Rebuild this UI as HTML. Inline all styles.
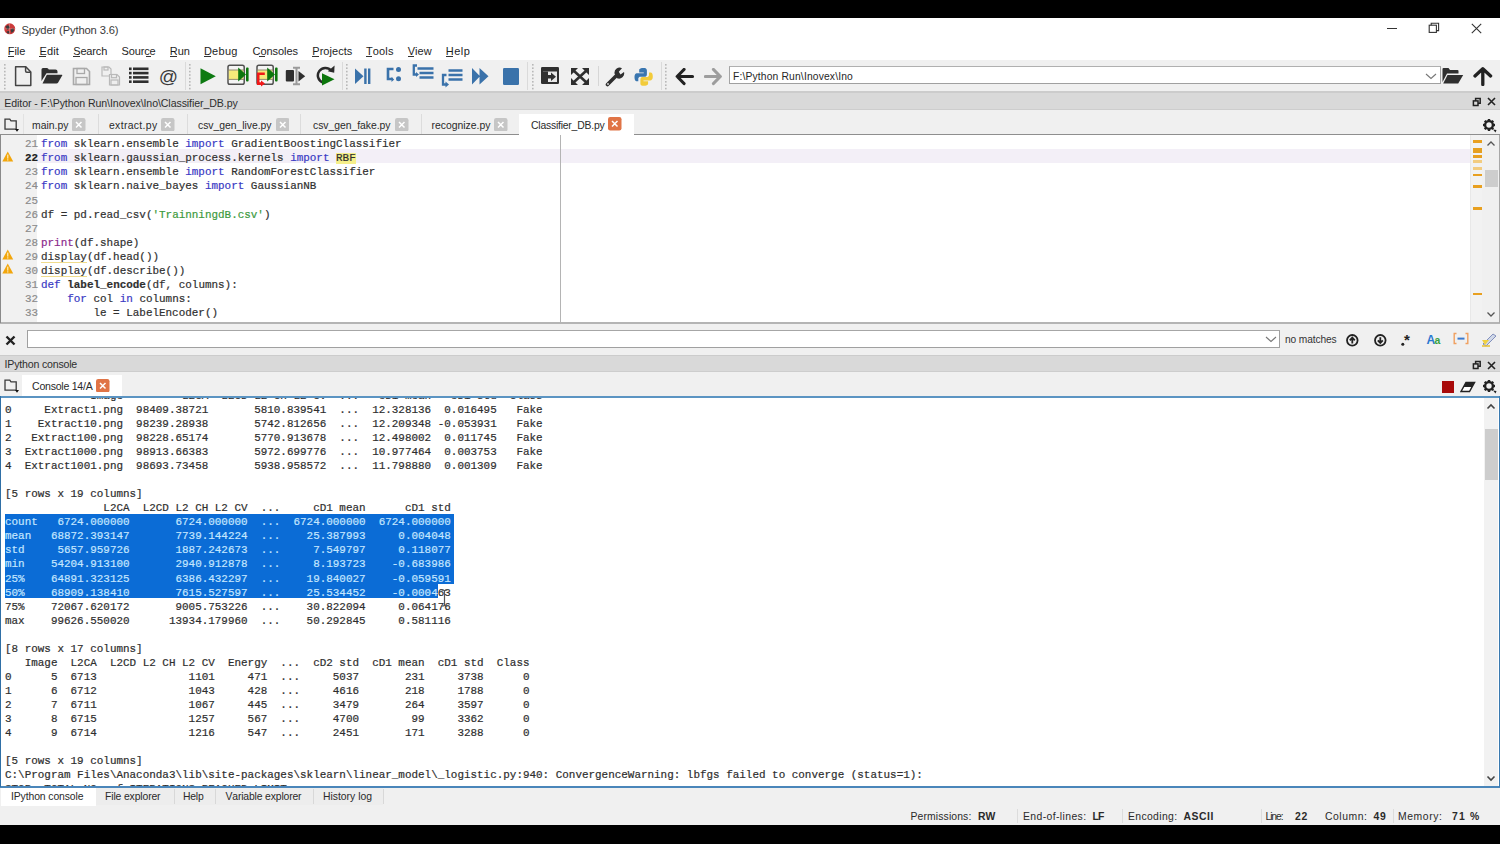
<!DOCTYPE html><html><head><meta charset="utf-8"><style>
html,body{margin:0;padding:0;width:1500px;height:844px;overflow:hidden;background:#000;}
body{position:relative;font-family:"Liberation Sans",sans-serif;font-kerning:none;}
.t{position:absolute;white-space:pre;z-index:5;}
.r{position:absolute;}
.m{position:absolute;white-space:pre;font-family:"Liberation Mono",monospace;font-size:11.2px;line-height:14.0625px;font-kerning:none;transform:scaleX(0.97656);transform-origin:0 0;-webkit-text-stroke:0.2px currentColor;}
</style></head><body>
<div class="r" style="left:0px;top:0px;width:1500px;height:18px;background:#000;"></div>
<div class="r" style="left:0px;top:18px;width:1500px;height:42px;background:#ffffff;"></div>
<div class="r" style="left:0px;top:60px;width:1500px;height:31px;background:#f0f0f0;"></div>
<div class="r" style="left:0px;top:92px;width:1500px;height:18px;background:#d9d9d9;"></div>
<div class="r" style="left:0px;top:91px;width:1500px;height:2px;background:#cccccc;"></div>
<div class="r" style="left:0px;top:109px;width:1500px;height:1.5px;background:#cdcdcd;"></div>
<div class="r" style="left:0px;top:110px;width:1500px;height:25px;background:#f0f0f0;"></div>
<div class="r" style="left:0px;top:133.6px;width:1500px;height:1.6px;background:#8e8e8e;"></div>
<div class="r" style="left:0px;top:135px;width:1500px;height:188px;background:#ffffff;"></div>
<div class="r" style="left:0px;top:322px;width:1500px;height:2px;background:#b4b4b4;"></div>
<div class="r" style="left:0px;top:324px;width:1500px;height:31px;background:#f0f0f0;"></div>
<div class="r" style="left:0px;top:355px;width:1500px;height:17px;background:#d9d9d9;"></div>
<div class="r" style="left:0px;top:354.5px;width:1500px;height:1.5px;background:#cccccc;"></div>
<div class="r" style="left:0px;top:371px;width:1500px;height:1.5px;background:#cdcdcd;"></div>
<div class="r" style="left:0px;top:372px;width:1500px;height:24px;background:#f0f0f0;"></div>
<div class="r" style="left:0px;top:396px;width:1500px;height:391px;background:#ffffff;"></div>
<div class="r" style="left:0px;top:787px;width:1500px;height:38px;background:#f0f0f0;"></div>
<div class="r" style="left:0px;top:825px;width:1500px;height:19px;background:#000;"></div>
<div class="t" style="left:21.50px;top:24.00px;font-size:11.2px;line-height:13.44px;color:#3a3a3a;letter-spacing:-0.137px;">Spyder (Python 3.6)</div>
<div class="t" style="left:7.80px;top:44.59px;font-size:11px;line-height:13.2px;color:#1e1e1e;letter-spacing:-0.081px;">File</div>
<div class="t" style="left:39.40px;top:44.59px;font-size:11px;line-height:13.2px;color:#1e1e1e;letter-spacing:0.161px;">Edit</div>
<div class="t" style="left:73.20px;top:44.59px;font-size:11px;line-height:13.2px;color:#1e1e1e;letter-spacing:-0.142px;">Search</div>
<div class="t" style="left:121.50px;top:44.59px;font-size:11px;line-height:13.2px;color:#1e1e1e;letter-spacing:-0.142px;">Source</div>
<div class="t" style="left:169.70px;top:44.59px;font-size:11px;line-height:13.2px;color:#1e1e1e;letter-spacing:0.040px;">Run</div>
<div class="t" style="left:203.90px;top:44.59px;font-size:11px;line-height:13.2px;color:#1e1e1e;letter-spacing:0.277px;">Debug</div>
<div class="t" style="left:252.50px;top:44.59px;font-size:11px;line-height:13.2px;color:#1e1e1e;letter-spacing:-0.045px;">Consoles</div>
<div class="t" style="left:312.30px;top:44.59px;font-size:11px;line-height:13.2px;color:#1e1e1e;letter-spacing:0.033px;">Projects</div>
<div class="t" style="left:366.00px;top:44.59px;font-size:11px;line-height:13.2px;color:#1e1e1e;letter-spacing:0.140px;">Tools</div>
<div class="t" style="left:407.80px;top:44.59px;font-size:11px;line-height:13.2px;color:#1e1e1e;letter-spacing:-0.011px;">View</div>
<div class="t" style="left:445.80px;top:44.59px;font-size:11px;line-height:13.2px;color:#1e1e1e;letter-spacing:0.494px;">Help</div>
<div class="t" style="left:4.30px;top:96.66px;font-size:10.6px;line-height:12.72px;color:#2e2e2e;letter-spacing:-0.090px;">Editor - F:\Python Run\Inovex\Ino\Classifier_DB.py</div>
<div class="t" style="left:4.60px;top:358.36px;font-size:10.6px;line-height:12.72px;color:#2e2e2e;letter-spacing:-0.195px;">IPython console</div>
<div class="t" style="left:32.00px;top:119.65px;font-size:10.4px;line-height:12.48px;color:#2a2a2a;letter-spacing:0.012px;">main.py</div>
<div class="t" style="left:109.00px;top:119.65px;font-size:10.4px;line-height:12.48px;color:#2a2a2a;letter-spacing:0.342px;">extract.py</div>
<div class="t" style="left:198.00px;top:119.65px;font-size:10.4px;line-height:12.48px;color:#2a2a2a;letter-spacing:-0.033px;">csv_gen_live.py</div>
<div class="t" style="left:313.00px;top:119.65px;font-size:10.4px;line-height:12.48px;color:#2a2a2a;letter-spacing:-0.037px;">csv_gen_fake.py</div>
<div class="t" style="left:431.50px;top:119.65px;font-size:10.4px;line-height:12.48px;color:#2a2a2a;letter-spacing:0.003px;">recognize.py</div>
<div class="t" style="left:531.00px;top:119.65px;font-size:10.4px;line-height:12.48px;color:#2a2a2a;letter-spacing:-0.210px;">Classifier_DB.py</div>
<div class="t" style="left:1285.00px;top:334.34px;font-size:10.2px;line-height:12.24px;color:#333;letter-spacing:-0.123px;">no matches</div>
<div class="t" style="left:32.00px;top:379.86px;font-size:10.6px;line-height:12.72px;color:#2a2a2a;letter-spacing:-0.262px;">Console 14/A</div>
<div class="t" style="left:11.00px;top:791.15px;font-size:10.4px;line-height:12.48px;color:#2a2a2a;letter-spacing:-0.100px;">IPython console</div>
<div class="t" style="left:105.00px;top:791.15px;font-size:10.4px;line-height:12.48px;color:#2a2a2a;letter-spacing:-0.132px;">File explorer</div>
<div class="t" style="left:183.00px;top:791.15px;font-size:10.4px;line-height:12.48px;color:#2a2a2a;letter-spacing:-0.222px;">Help</div>
<div class="t" style="left:225.50px;top:791.15px;font-size:10.4px;line-height:12.48px;color:#2a2a2a;letter-spacing:-0.154px;">Variable explorer</div>
<div class="t" style="left:323.00px;top:791.15px;font-size:10.4px;line-height:12.48px;color:#2a2a2a;letter-spacing:-0.011px;">History log</div>
<div class="t" style="left:910.50px;top:811.15px;font-size:10.4px;line-height:12.48px;color:#2a2a2a;letter-spacing:0.123px;">Permissions:</div>
<div class="t" style="left:978.00px;top:811.15px;font-size:10.4px;line-height:12.48px;color:#2a2a2a;font-weight:bold;letter-spacing:0.087px;">RW</div>
<div class="t" style="left:1023.00px;top:811.15px;font-size:10.4px;line-height:12.48px;color:#2a2a2a;letter-spacing:0.394px;">End-of-lines:</div>
<div class="t" style="left:1092.50px;top:811.15px;font-size:10.4px;line-height:12.48px;color:#2a2a2a;font-weight:bold;letter-spacing:-0.853px;">LF</div>
<div class="t" style="left:1128.00px;top:811.15px;font-size:10.4px;line-height:12.48px;color:#2a2a2a;letter-spacing:0.360px;">Encoding:</div>
<div class="t" style="left:1183.50px;top:811.15px;font-size:10.4px;line-height:12.48px;color:#2a2a2a;font-weight:bold;letter-spacing:0.553px;">ASCII</div>
<div class="t" style="left:1265.50px;top:811.15px;font-size:10.4px;line-height:12.48px;color:#2a2a2a;letter-spacing:-1.110px;">Line:</div>
<div class="t" style="left:1295.00px;top:811.15px;font-size:10.4px;line-height:12.48px;color:#2a2a2a;font-weight:bold;letter-spacing:0.716px;">22</div>
<div class="t" style="left:1325.00px;top:811.15px;font-size:10.4px;line-height:12.48px;color:#2a2a2a;letter-spacing:0.539px;">Column:</div>
<div class="t" style="left:1373.50px;top:811.15px;font-size:10.4px;line-height:12.48px;color:#2a2a2a;font-weight:bold;letter-spacing:0.716px;">49</div>
<div class="t" style="left:1398.00px;top:811.15px;font-size:10.4px;line-height:12.48px;color:#2a2a2a;letter-spacing:0.579px;">Memory:</div>
<div class="t" style="left:1452.00px;top:811.15px;font-size:10.4px;line-height:12.48px;color:#2a2a2a;font-weight:bold;letter-spacing:1.199px;">71 %</div>
<div style="position:absolute;left:1px;top:135px;width:1470px;height:187px;overflow:hidden;background:#fff;">
<div class="r" style="left:0px;top:0px;width:36px;height:187px;background:#f1f1f1;"></div>
<div class="r" style="left:36px;top:14px;width:1434px;height:14px;background:#f3eff7;"></div>
<div class="r" style="left:559px;top:0px;width:1.2px;height:187px;background:#b4b4b4;"></div>
<div class="r" style="left:334.5px;top:18px;width:20.5px;height:11px;background:#f6ef8a;"></div>
<div class="m" style="left:23.5px;top:2.29px;color:#8c8c8c;">21</div>
<div class="m" style="left:39.6px;top:2.29px;"><span style="color:#3a3ac4;">from</span><span style="color:#303030;"> sklearn.ensemble </span><span style="color:#3a3ac4;">import</span><span style="color:#303030;"> GradientBoostingClassifier</span></div>
<div class="m" style="left:23.5px;top:16.35px;color:#222;font-weight:bold;">22</div>
<div class="m" style="left:39.6px;top:16.35px;"><span style="color:#3a3ac4;">from</span><span style="color:#303030;"> sklearn.gaussian_process.kernels </span><span style="color:#3a3ac4;">import</span><span style="color:#303030;"> RBF</span></div>
<div class="m" style="left:23.5px;top:30.41px;color:#8c8c8c;">23</div>
<div class="m" style="left:39.6px;top:30.41px;"><span style="color:#3a3ac4;">from</span><span style="color:#303030;"> sklearn.ensemble </span><span style="color:#3a3ac4;">import</span><span style="color:#303030;"> RandomForestClassifier</span></div>
<div class="m" style="left:23.5px;top:44.48px;color:#8c8c8c;">24</div>
<div class="m" style="left:39.6px;top:44.48px;"><span style="color:#3a3ac4;">from</span><span style="color:#303030;"> sklearn.naive_bayes </span><span style="color:#3a3ac4;">import</span><span style="color:#303030;"> GaussianNB</span></div>
<div class="m" style="left:23.5px;top:58.54px;color:#8c8c8c;">25</div>
<div class="m" style="left:39.6px;top:58.54px;"></div>
<div class="m" style="left:23.5px;top:72.60px;color:#8c8c8c;">26</div>
<div class="m" style="left:39.6px;top:72.60px;"><span style="color:#303030;">df = pd.read_csv(</span><span style="color:#3c9a3c;">&#x27;TrainningdB.csv&#x27;</span><span style="color:#303030;">)</span></div>
<div class="m" style="left:23.5px;top:86.66px;color:#8c8c8c;">27</div>
<div class="m" style="left:39.6px;top:86.66px;"></div>
<div class="m" style="left:23.5px;top:100.73px;color:#8c8c8c;">28</div>
<div class="m" style="left:39.6px;top:100.73px;"><span style="color:#8c2a8c;">print</span><span style="color:#303030;">(df.shape)</span></div>
<div class="m" style="left:23.5px;top:114.79px;color:#8c8c8c;">29</div>
<div class="m" style="left:39.6px;top:114.79px;"><span style="color:#303030;">display</span><span style="color:#303030;">(df.head())</span></div>
<div class="m" style="left:23.5px;top:128.85px;color:#8c8c8c;">30</div>
<div class="m" style="left:39.6px;top:128.85px;"><span style="color:#303030;">display</span><span style="color:#303030;">(df.describe())</span></div>
<div class="m" style="left:23.5px;top:142.91px;color:#8c8c8c;">31</div>
<div class="m" style="left:39.6px;top:142.91px;"><span style="color:#3a3ac4;">def</span><span style="color:#303030;"> </span><span style="color:#303030;font-weight:bold;">label_encode</span><span style="color:#303030;">(df, columns):</span></div>
<div class="m" style="left:23.5px;top:156.98px;color:#8c8c8c;">32</div>
<div class="m" style="left:39.6px;top:156.98px;"><span style="color:#303030;">    </span><span style="color:#3a3ac4;">for</span><span style="color:#303030;"> col </span><span style="color:#3a3ac4;">in</span><span style="color:#303030;"> columns:</span></div>
<div class="m" style="left:23.5px;top:171.04px;color:#8c8c8c;">33</div>
<div class="m" style="left:39.6px;top:171.04px;"><span style="color:#303030;">        le = LabelEncoder()</span></div>
<div class="m" style="left:23.5px;top:185.10px;color:#8c8c8c;">34</div>
<div class="m" style="left:39.6px;top:185.10px;"><span style="color:#303030;">        df[col] = le.fit_transform(df[col])</span></div>
<div class="r" style="left:39.6px;top:127.0px;width:45.9375px;height:1.3px;background:#f0dc8c;"></div>
<div class="r" style="left:39.6px;top:141.0625px;width:45.9375px;height:1.3px;background:#f0dc8c;"></div>
<svg class="r" style="left:0.5px;top:15.56px" width="12" height="11" viewBox="0 0 12 11"><path d="M5.75 0.5 L11.2 10.6 L0.3 10.6 Z" fill="#f2a60c"/><rect x="5.1" y="3.6" width="1.3" height="4" fill="#fde9b0"/><rect x="5.1" y="8.3" width="1.3" height="1.2" fill="#fde9b0"/></svg>
<svg class="r" style="left:0.5px;top:114.0px" width="12" height="11" viewBox="0 0 12 11"><path d="M5.75 0.5 L11.2 10.6 L0.3 10.6 Z" fill="#f2a60c"/><rect x="5.1" y="3.6" width="1.3" height="4" fill="#fde9b0"/><rect x="5.1" y="8.3" width="1.3" height="1.2" fill="#fde9b0"/></svg>
<svg class="r" style="left:0.5px;top:128.06px" width="12" height="11" viewBox="0 0 12 11"><path d="M5.75 0.5 L11.2 10.6 L0.3 10.6 Z" fill="#f2a60c"/><rect x="5.1" y="3.6" width="1.3" height="4" fill="#fde9b0"/><rect x="5.1" y="8.3" width="1.3" height="1.2" fill="#fde9b0"/></svg>
</div>
<div class="r" style="left:1470px;top:135px;width:1px;height:187px;background:#e8e8e8;"></div>
<div class="r" style="left:1471px;top:135px;width:11px;height:187px;background:#f2f2f2;"></div>
<div class="r" style="left:1472.5px;top:140px;width:9px;height:2.5px;background:#e8a020;"></div>
<div class="r" style="left:1472.5px;top:147.5px;width:9px;height:5px;background:#e6a020;"></div>
<div class="r" style="left:1472.5px;top:155px;width:9px;height:2.5px;background:#e8a020;"></div>
<div class="r" style="left:1472.5px;top:160px;width:9px;height:2.5px;background:#f2cc80;"></div>
<div class="r" style="left:1472.5px;top:167px;width:9px;height:2.5px;background:#f2cc80;"></div>
<div class="r" style="left:1472.5px;top:173.5px;width:9px;height:2.5px;background:#e8a020;"></div>
<div class="r" style="left:1472.5px;top:185px;width:9px;height:2.5px;background:#e8a020;"></div>
<div class="r" style="left:1472.5px;top:207px;width:9px;height:2.5px;background:#e8a020;"></div>
<div class="r" style="left:1472.5px;top:292.5px;width:9px;height:2.5px;background:#e8a020;"></div>
<div class="r" style="left:1482px;top:135px;width:17px;height:187px;background:#f0f0f0;"></div>
<div class="r" style="left:1484.5px;top:170px;width:13px;height:16.5px;background:#cdcdcd;"></div>
<div class="r" style="left:1499px;top:135px;width:1px;height:188px;background:#a8a8a8;"></div>
<div class="r" style="left:0px;top:135px;width:1px;height:188px;background:#8a8a8a;"></div>
<svg class="r" style="left:1486px;top:140px" width="10" height="7" viewBox="0 0 10 7"><path d="M1.5 5.5 L5 2 L8.5 5.5" stroke="#555" stroke-width="1.3" fill="none"/></svg>
<svg class="r" style="left:1486px;top:311px" width="10" height="7" viewBox="0 0 10 7"><path d="M1.5 1.5 L5 5 L8.5 1.5" stroke="#555" stroke-width="1.3" fill="none"/></svg>
<div style="position:absolute;left:0;top:397px;width:1482px;height:389px;overflow:hidden;">
<div class="r" style="left:4.5px;top:117.00px;width:449.5px;height:70.312px;background:#0b6cd6;"></div>
<div class="r" style="left:4.5px;top:187.31px;width:433.5px;height:14.062px;background:#0b6cd6;"></div>
<div class="m" style="left:4.8px;top:-8.27px;color:#2e2e2e;">             Image         L2CA  L2CD L2 CH L2 CV  ...   cD1 mean   cD1 std  Class
0     Extract1.png  98409.38721       5810.839541  ...  12.328136  0.016495   Fake
1    Extract10.png  98239.28938       5742.812656  ...  12.209348 -0.053931   Fake
2   Extract100.png  98228.65174       5770.913678  ...  12.498002  0.011745   Fake
3  Extract1000.png  98913.66383       5972.699776  ...  10.977464  0.003753   Fake
4  Extract1001.png  98693.73458       5938.958572  ...  11.798880  0.001309   Fake

[5 rows x 19 columns]
               L2CA  L2CD L2 CH L2 CV  ...     cD1 mean      cD1 std
<span style="color:#c4e6ff">count   6724.000000       6724.000000  ...  6724.000000  6724.000000</span>
<span style="color:#c4e6ff">mean   68872.393147       7739.144224  ...    25.387993     0.004048</span>
<span style="color:#c4e6ff">std     5657.959726       1887.242673  ...     7.549797     0.118077</span>
<span style="color:#c4e6ff">min    54204.913100       2940.912878  ...     8.193723    -0.683986</span>
<span style="color:#c4e6ff">25%    64891.323125       6386.432297  ...    19.840027    -0.059591</span>
<span style="color:#c4e6ff">50%    68909.138410       7615.527597  ...    25.534452    -0.0004</span>63
75%    72067.620172       9005.753226  ...    30.822094     0.064176
max    99626.550020      13934.179960  ...    50.292845     0.581116

[8 rows x 17 columns]
   Image  L2CA  L2CD L2 CH L2 CV  Energy  ...  cD2 std  cD1 mean  cD1 std  Class
0      5  6713              1101     471  ...     5037       231     3738      0
1      6  6712              1043     428  ...     4616       218     1788      0
2      7  6711              1067     445  ...     3479       264     3597      0
3      8  6715              1257     567  ...     4700        99     3362      0
4      9  6714              1216     547  ...     2451       171     3288      0

[5 rows x 19 columns]
C:\Program Files\Anaconda3\lib\site-packages\sklearn\linear_model\_logistic.py:940: ConvergenceWarning: lbfgs failed to converge (status=1):
STOP: TOTAL NO. of ITERATIONS REACHED LIMIT.
</div>
</div>
<svg class="r" style="left:3px;top:22px" width="14" height="14" viewBox="0 0 14 14"><circle cx="6.7" cy="6.8" r="5.5" fill="#cc3a3a"/><path d="M2.5 4.5 L5 3 L7 5.5 L4.5 8 Z M7.5 7.5 L10.5 6 L11 9 L8.5 11 Z M3.5 9.5 L6 9 L6.5 11.8 L4 11 Z" fill="#3c3c3c"/><path d="M6.5 1.3 L6.5 12.3 M1.2 6.8 L12.2 6.8" stroke="#fff" stroke-width="0.5" opacity="0.5"/></svg>
<div class="r" style="left:1386.5px;top:28px;width:10px;height:1.2px;background:#333;"></div>
<svg class="r" style="left:1428px;top:22px" width="12" height="12" viewBox="0 0 12 12"><rect x="1.2" y="3.2" width="7.2" height="7.2" fill="none" stroke="#333" stroke-width="1.1"/><path d="M3.2 3.2 V1.2 H10.6 V8.6 H8.4" fill="none" stroke="#333" stroke-width="1.1"/></svg>
<svg class="r" style="left:1471px;top:22.5px" width="11" height="11" viewBox="0 0 11 11"><path d="M0.8 0.8 L10.2 10.2 M10.2 0.8 L0.8 10.2" stroke="#333" stroke-width="1.1"/></svg>
<div class="r" style="left:7.8px;top:55.6px;width:6px;height:1px;background:#333;"></div>
<div class="r" style="left:39.4px;top:55.6px;width:6.5px;height:1px;background:#333;"></div>
<div class="r" style="left:73.2px;top:55.6px;width:6.5px;height:1px;background:#333;"></div>
<div class="r" style="left:146px;top:55.6px;width:5px;height:1px;background:#333;"></div>
<div class="r" style="left:169.7px;top:55.6px;width:7px;height:1px;background:#333;"></div>
<div class="r" style="left:203.9px;top:55.6px;width:7.5px;height:1px;background:#333;"></div>
<div class="r" style="left:258.5px;top:55.6px;width:6px;height:1px;background:#333;"></div>
<div class="r" style="left:312.3px;top:55.6px;width:6.5px;height:1px;background:#333;"></div>
<div class="r" style="left:366px;top:55.6px;width:6px;height:1px;background:#333;"></div>
<div class="r" style="left:407.8px;top:55.6px;width:6.5px;height:1px;background:#333;"></div>
<div class="r" style="left:445.8px;top:55.6px;width:7px;height:1px;background:#333;"></div>
<svg class="r" style="left:3.7px;top:63.5px" width="2" height="27" viewBox="0 0 2 27"><rect x="0" y="0.0" width="1.6" height="1.6" fill="#b8b8b8"/><rect x="0" y="3.4" width="1.6" height="1.6" fill="#b8b8b8"/><rect x="0" y="6.8" width="1.6" height="1.6" fill="#b8b8b8"/><rect x="0" y="10.2" width="1.6" height="1.6" fill="#b8b8b8"/><rect x="0" y="13.6" width="1.6" height="1.6" fill="#b8b8b8"/><rect x="0" y="17.0" width="1.6" height="1.6" fill="#b8b8b8"/><rect x="0" y="20.4" width="1.6" height="1.6" fill="#b8b8b8"/><rect x="0" y="23.8" width="1.6" height="1.6" fill="#b8b8b8"/></svg>
<svg class="r" style="left:189.2px;top:63.5px" width="2" height="27" viewBox="0 0 2 27"><rect x="0" y="0.0" width="1.6" height="1.6" fill="#b8b8b8"/><rect x="0" y="3.4" width="1.6" height="1.6" fill="#b8b8b8"/><rect x="0" y="6.8" width="1.6" height="1.6" fill="#b8b8b8"/><rect x="0" y="10.2" width="1.6" height="1.6" fill="#b8b8b8"/><rect x="0" y="13.6" width="1.6" height="1.6" fill="#b8b8b8"/><rect x="0" y="17.0" width="1.6" height="1.6" fill="#b8b8b8"/><rect x="0" y="20.4" width="1.6" height="1.6" fill="#b8b8b8"/><rect x="0" y="23.8" width="1.6" height="1.6" fill="#b8b8b8"/></svg>
<svg class="r" style="left:346.2px;top:63.5px" width="2" height="27" viewBox="0 0 2 27"><rect x="0" y="0.0" width="1.6" height="1.6" fill="#b8b8b8"/><rect x="0" y="3.4" width="1.6" height="1.6" fill="#b8b8b8"/><rect x="0" y="6.8" width="1.6" height="1.6" fill="#b8b8b8"/><rect x="0" y="10.2" width="1.6" height="1.6" fill="#b8b8b8"/><rect x="0" y="13.6" width="1.6" height="1.6" fill="#b8b8b8"/><rect x="0" y="17.0" width="1.6" height="1.6" fill="#b8b8b8"/><rect x="0" y="20.4" width="1.6" height="1.6" fill="#b8b8b8"/><rect x="0" y="23.8" width="1.6" height="1.6" fill="#b8b8b8"/></svg>
<svg class="r" style="left:531.7px;top:63.5px" width="2" height="27" viewBox="0 0 2 27"><rect x="0" y="0.0" width="1.6" height="1.6" fill="#b8b8b8"/><rect x="0" y="3.4" width="1.6" height="1.6" fill="#b8b8b8"/><rect x="0" y="6.8" width="1.6" height="1.6" fill="#b8b8b8"/><rect x="0" y="10.2" width="1.6" height="1.6" fill="#b8b8b8"/><rect x="0" y="13.6" width="1.6" height="1.6" fill="#b8b8b8"/><rect x="0" y="17.0" width="1.6" height="1.6" fill="#b8b8b8"/><rect x="0" y="20.4" width="1.6" height="1.6" fill="#b8b8b8"/><rect x="0" y="23.8" width="1.6" height="1.6" fill="#b8b8b8"/></svg>
<svg class="r" style="left:664.7px;top:63.5px" width="2" height="27" viewBox="0 0 2 27"><rect x="0" y="0.0" width="1.6" height="1.6" fill="#b8b8b8"/><rect x="0" y="3.4" width="1.6" height="1.6" fill="#b8b8b8"/><rect x="0" y="6.8" width="1.6" height="1.6" fill="#b8b8b8"/><rect x="0" y="10.2" width="1.6" height="1.6" fill="#b8b8b8"/><rect x="0" y="13.6" width="1.6" height="1.6" fill="#b8b8b8"/><rect x="0" y="17.0" width="1.6" height="1.6" fill="#b8b8b8"/><rect x="0" y="20.4" width="1.6" height="1.6" fill="#b8b8b8"/><rect x="0" y="23.8" width="1.6" height="1.6" fill="#b8b8b8"/></svg>
<div class="r" style="left:185px;top:62px;width:1px;height:28px;background:#dadada;"></div>
<div class="r" style="left:341.5px;top:62px;width:1px;height:28px;background:#dadada;"></div>
<div class="r" style="left:527px;top:62px;width:1px;height:28px;background:#dadada;"></div>
<div class="r" style="left:660.5px;top:62px;width:1px;height:28px;background:#dadada;"></div>
<div class="r" style="left:598px;top:66px;width:1px;height:20px;background:#d6d6d6;"></div>
<svg class="r" style="left:14px;top:65px" width="20" height="22" viewBox="0 0 20 22"><path d="M1.6 1.8 H11.8 L16.8 7 V20.4 H1.6 Z" fill="#f0f0f0" stroke="#444" stroke-width="1.5" stroke-linejoin="round"/><path d="M11.6 1.8 V6 Q11.6 7.2 12.8 7.2 H16.8" fill="none" stroke="#444" stroke-width="1.5"/></svg>
<svg class="r" style="left:41px;top:67px" width="22" height="18" viewBox="0 0 22 18"><path d="M0.5 2.5 Q0.5 1 2 1 H6 Q7.2 1 7.8 2.5 H14.5 Q16.5 2.5 16.5 4.5 V6.2 H5.5 L0.5 14 Z" fill="#2f2f2f"/><path d="M5.8 7.8 H20.8 Q21.6 7.8 21.2 8.6 L17 15.8 Q16.5 16.6 15.5 16.6 H1.5 Z" fill="#2f2f2f"/></svg>
<svg class="r" style="left:72px;top:67px" width="19" height="19" viewBox="0 0 19 19"><path d="M1.5 1.5 H14.5 L17.5 4.5 V17.5 H1.5 Z" fill="none" stroke="#a9a9a9" stroke-width="1.6"/><rect x="5" y="1.5" width="7.5" height="5" fill="none" stroke="#a9a9a9" stroke-width="1.3"/><rect x="4" y="10.5" width="11" height="7" fill="none" stroke="#a9a9a9" stroke-width="1.3"/></svg>
<svg class="r" style="left:101px;top:66px" width="20" height="20" viewBox="0 0 20 20"><g fill="none" stroke="#b9b9b9" stroke-width="1.2"><path d="M1 1 H8 L10 3 V10 H1 Z"/><rect x="3" y="1" width="4" height="3"/><path d="M8.5 8.5 H16 L18.5 11 V19 H8.5 Z" fill="#eee"/><rect x="10.5" y="8.5" width="5" height="3.2"/><rect x="10" y="14" width="7" height="5"/></g></svg>
<svg class="r" style="left:128px;top:66px" width="22" height="19" viewBox="0 0 22 19"><g fill="#2f2f2f"><rect x="1" y="1.5" width="2.6" height="2.6"/><rect x="5" y="1.5" width="15.5" height="2.6"/><rect x="1" y="5.8" width="2.6" height="2.6"/><rect x="5" y="5.8" width="15.5" height="2.6"/><rect x="1" y="10.1" width="2.6" height="2.6"/><rect x="5" y="10.1" width="15.5" height="2.6"/><rect x="1" y="14.4" width="2.6" height="2.6"/><rect x="5" y="14.4" width="15.5" height="2.6"/></g></svg>
<svg class="r" style="left:159px;top:67px" width="20" height="19" viewBox="0 0 20 19"><text x="9.5" y="15.5" font-family="Liberation Sans" font-size="19" text-anchor="middle" fill="#3a3a3a">@</text></svg>
<svg class="r" style="left:199px;top:67px" width="19" height="19" viewBox="0 0 19 19"><path d="M1.5 1.2 L16.8 9.2 L1.5 17.2 Z" fill="#0e7a12"/></svg>
<svg class="r" style="left:227px;top:64px" width="24" height="23" viewBox="0 0 24 23"><rect x="1" y="1.2" width="16.2" height="19" rx="1.8" fill="#f4f4f4" stroke="#505050" stroke-width="1.5"/><rect x="1.8" y="6.2" width="14.6" height="9" fill="#f6ea7a"/><line x1="1" y1="6" x2="17" y2="6" stroke="#8a8060" stroke-width="0.9"/><line x1="1" y1="15.4" x2="17" y2="15.4" stroke="#8a8060" stroke-width="0.9"/><path d="M11.2 3.6 L19 10.6 L11.2 17.4 Z" fill="#0e760e"/><rect x="19" y="3.6" width="2.6" height="13.8" rx="1" fill="#0e760e"/></svg>
<svg class="r" style="left:256px;top:64px" width="24" height="24" viewBox="0 0 24 24"><rect x="1" y="1.2" width="16.2" height="19" rx="1.8" fill="#f4f4f4" stroke="#505050" stroke-width="1.5"/><rect x="1.8" y="6.2" width="14.6" height="9" fill="#f6ea7a"/><line x1="1" y1="6" x2="17" y2="6" stroke="#8a8060" stroke-width="0.9"/><line x1="1" y1="15.4" x2="17" y2="15.4" stroke="#8a8060" stroke-width="0.9"/><path d="M11.2 3.6 L19 10.6 L11.2 17.4 Z" fill="#0e760e"/><rect x="19" y="3.6" width="2.6" height="13.8" rx="1" fill="#0e760e"/><path d="M8.8 9.8 H2.2 V19.6 H6" fill="none" stroke="#f01818" stroke-width="2.6"/><path d="M5 16.6 L9 19.6 L5 22.6 Z" fill="#f01818"/></svg>
<svg class="r" style="left:284px;top:66px" width="23" height="21" viewBox="0 0 23 21"><rect x="1.8" y="4" width="8.2" height="11.6" rx="1" fill="#2f2f2f"/><path d="M9 1.8 H16 M12.5 1.8 V18.2 M9 18.2 H16" stroke="#9a9a9a" stroke-width="2"/><path d="M14.5 5 L21.2 10.2 L14.5 15.5 Z" fill="#2f2f2f"/></svg>
<svg class="r" style="left:316px;top:65px" width="20" height="22" viewBox="0 0 20 22"><path d="M15.2 5.7 A7.5 7.5 0 1 0 6.9 17.5" fill="none" stroke="#2a2a2a" stroke-width="2.5"/><path d="M11.8 6.2 L18.6 0.6 L18.2 7.8 Z" fill="#2a2a2a"/><path d="M6 8.2 L18.5 14.3 L6 20.5 Z" fill="#0c760c"/></svg>
<svg class="r" style="left:354px;top:67px" width="18" height="19" viewBox="0 0 18 19"><path d="M1 1.5 L9.5 9.2 L1 17 Z" fill="#3a72aa"/><rect x="10.2" y="1.5" width="2.4" height="15.5" fill="#3a72aa"/><rect x="14" y="1.5" width="2.4" height="15.5" fill="#3a72aa"/></svg>
<svg class="r" style="left:386px;top:66px" width="17" height="18" viewBox="0 0 17 18"><path d="M7.5 3 H2 V13 H7" fill="none" stroke="#3a72aa" stroke-width="2.6"/><path d="M5.5 11 L8.2 13.5 L5.5 16 Z" fill="#3a72aa"/><circle cx="12.5" cy="3.6" r="2.5" fill="#3a72aa"/><circle cx="12.5" cy="12.8" r="2.5" fill="#3a72aa"/></svg>
<svg class="r" style="left:412px;top:64px" width="23" height="18" viewBox="0 0 23 18"><path d="M5 1.5 H1.8 V10.5 H4.5" fill="none" stroke="#3a72aa" stroke-width="2.3"/><path d="M5.5 4.5 H21.5 M7.5 9 H21.5 M7.5 13.5 H21.5" stroke="#3a72aa" stroke-width="2.3"/><path d="M4 8 L7 10.5 L4 13 Z" fill="#3a72aa"/></svg>
<svg class="r" style="left:441px;top:68px" width="23" height="20" viewBox="0 0 23 20"><path d="M7.5 2.5 H21.5 M7.5 7 H21.5 M7.5 11.5 H21.5" stroke="#3a72aa" stroke-width="2.3"/><path d="M5.5 7 H2 V16.5 H5" fill="none" stroke="#3a72aa" stroke-width="2.3"/><path d="M4.5 13.5 L8 16.5 L4.5 19.5 Z" fill="#3a72aa"/></svg>
<svg class="r" style="left:471px;top:67px" width="19" height="19" viewBox="0 0 19 19"><path d="M1 1 L9 9.2 L1 17.5 Z M8.5 1 L17.5 9.2 L8.5 17.5 Z" fill="#3a72aa"/></svg>
<svg class="r" style="left:502px;top:67px" width="18" height="19" viewBox="0 0 18 19"><rect x="1" y="1" width="16" height="17" rx="1.2" fill="#3a72aa"/></svg>
<svg class="r" style="left:540px;top:66px" width="20" height="19" viewBox="0 0 20 19"><rect x="1" y="1" width="18" height="17" rx="1.3" fill="#2f2f2f"/><rect x="3" y="5.5" width="14" height="10.5" fill="#e8e8e8"/><rect x="3" y="5.5" width="5" height="10.5" fill="#2f2f2f"/><path d="M7 9 H11 V6.5 L16 10.8 L11 15 V12.5 H7 Z" fill="#2f2f2f"/></svg>
<svg class="r" style="left:570px;top:67px" width="20" height="19" viewBox="0 0 20 19"><g stroke="#2f2f2f" stroke-width="2.6"><path d="M3.5 3.5 L16.5 15.5 M16.5 3.5 L3.5 15.5"/></g><g fill="#2f2f2f"><path d="M1 1 H8 L1 8 Z M19 1 H12 L19 8 Z M1 18 H8 L1 11 Z M19 18 H12 L19 11 Z"/></g></svg>
<svg class="r" style="left:605px;top:67px" width="21" height="20" viewBox="0 0 21 20"><path d="M2.5 17.5 L11 9" stroke="#2f2f2f" stroke-width="3.6" stroke-linecap="round"/><path d="M9.5 6.5 A5.2 5.2 0 0 1 17 1.2 L13.8 4.8 L15.5 7.5 L19 5 A5.2 5.2 0 0 1 12 11.2 Z" fill="#2f2f2f"/><circle cx="3" cy="17" r="0.9" fill="#ddd"/></svg>
<svg class="r" style="left:634px;top:67px" width="20" height="20" viewBox="0 0 20 20"><path d="M9.5 1 C5 1 5.2 3 5.2 3 V5.5 H9.8 V6.3 H3.2 C3.2 6.3 0.5 6 0.5 10.2 C0.5 14.4 2.8 14.2 2.8 14.2 H4.3 V12 C4.3 12 4.2 9.7 6.6 9.7 H10.6 C10.6 9.7 12.9 9.8 12.9 7.5 V3.4 C12.9 3.4 13.2 1 9.5 1 Z" fill="#3a76b0"/><path d="M9.8 18.8 C14.3 18.8 14.1 16.8 14.1 16.8 V14.3 H9.5 V13.5 H16.1 C16.1 13.5 18.8 13.8 18.8 9.6 C18.8 5.4 16.5 5.6 16.5 5.6 H15 V7.8 C15 7.8 15.1 10.1 12.7 10.1 H8.7 C8.7 10.1 6.4 10 6.4 12.3 V16.4 C6.4 16.4 6.1 18.8 9.8 18.8 Z" fill="#f2cb3a"/></svg>
<svg class="r" style="left:675px;top:68px" width="20" height="18" viewBox="0 0 20 18"><path d="M9 1.5 L2.2 8.5 L9 15.5 M2.5 8.5 H17.5" fill="none" stroke="#222" stroke-width="3.2" stroke-linejoin="round" stroke-linecap="round"/></svg>
<svg class="r" style="left:704px;top:68px" width="19" height="18" viewBox="0 0 19 18"><path d="M9.5 1.5 L16.3 8.5 L9.5 15.5 M16 8.5 H1.5" fill="none" stroke="#9d9d9d" stroke-width="3.2" stroke-linejoin="round" stroke-linecap="round"/></svg>
<div class="r" style="left:728.5px;top:66.2px;width:710px;height:16.3px;background:#fff;border:1px solid #a4a4a4;border-top:1.5px solid #b0b0b0;border-bottom:1.5px solid #a0a0a0;"></div>
<div class="t" style="left:733.00px;top:70.65px;font-size:10.3px;line-height:12.36px;color:#262626;letter-spacing:0.157px;">F:\Python Run\Inovex\Ino</div>
<svg class="r" style="left:1425px;top:73px" width="12" height="7" viewBox="0 0 12 7"><path d="M1 1 L6 5.5 L11 1" fill="none" stroke="#777" stroke-width="1.1"/></svg>
<svg class="r" style="left:1442px;top:67px" width="22" height="18" viewBox="0 0 22 18"><path d="M0.5 2 Q0.5 1 1.5 1 H6.5 L8 3 H15.5 Q16.5 3 16.5 4 V6.5 H5 L0.5 15 Z" fill="#2f2f2f"/><path d="M5.5 8 H21.2 L16.2 16.5 H1.2 Z" fill="#2f2f2f"/></svg>
<svg class="r" style="left:1473px;top:67px" width="20" height="19" viewBox="0 0 20 19"><path d="M2 9 L9.8 1.8 L17.6 9 M9.8 2.5 V17.5" fill="none" stroke="#222" stroke-width="3.3" stroke-linejoin="round" stroke-linecap="round"/></svg>
<svg class="r" style="left:1471.5px;top:96.5px" width="10" height="10" viewBox="0 0 10 10"><rect x="1.4" y="3.9" width="4.6" height="4.6" fill="none" stroke="#222" stroke-width="1.5"/><path d="M3.6 3.9 V1.6 H8.2 V6.2 H6" fill="none" stroke="#222" stroke-width="1.5"/></svg>
<svg class="r" style="left:1487px;top:97px" width="9" height="9" viewBox="0 0 9 9"><path d="M1 1 L8 8 M8 1 L1 8" stroke="#222" stroke-width="1.6"/></svg>
<svg class="r" style="left:1471.5px;top:360px" width="10" height="10" viewBox="0 0 10 10"><rect x="1.4" y="3.9" width="4.6" height="4.6" fill="none" stroke="#222" stroke-width="1.5"/><path d="M3.6 3.9 V1.6 H8.2 V6.2 H6" fill="none" stroke="#222" stroke-width="1.5"/></svg>
<svg class="r" style="left:1487px;top:360.5px" width="9" height="9" viewBox="0 0 9 9"><path d="M1 1 L8 8 M8 1 L1 8" stroke="#222" stroke-width="1.6"/></svg>
<svg class="r" style="left:3.5px;top:118px" width="16" height="15" viewBox="0 0 16 15"><path d="M1 1.2 H5.8 L7 2.8 H12.2 V11.2 H1 Z" fill="none" stroke="#3a3a3a" stroke-width="1.3"/><path d="M11 11 L15 11 L13 13.8 Z" fill="#111"/></svg>
<svg class="r" style="left:3.5px;top:379px" width="16" height="15" viewBox="0 0 16 15"><path d="M1 1.2 H5.8 L7 2.8 H12.2 V11.2 H1 Z" fill="none" stroke="#3a3a3a" stroke-width="1.3"/><path d="M11 11 L15 11 L13 13.8 Z" fill="#111"/></svg>
<svg class="r" style="left:1483px;top:118.5px" width="14" height="14" viewBox="0 0 14 14"><g transform="translate(6 6)"><circle r="3.9" fill="none" stroke="#222" stroke-width="2.4"/><g fill="#222"><rect x="-1.2" y="-6" width="2.4" height="2.6"/><rect x="-1.2" y="3.4" width="2.4" height="2.6"/><rect x="-6" y="-1.2" width="2.6" height="2.4"/><rect x="3.4" y="-1.2" width="2.6" height="2.4"/><rect x="-1.2" y="-6" width="2.4" height="2.6" transform="rotate(45)"/><rect x="-1.2" y="3.4" width="2.4" height="2.6" transform="rotate(45)"/><rect x="-6" y="-1.2" width="2.6" height="2.4" transform="rotate(45)"/><rect x="3.4" y="-1.2" width="2.6" height="2.4" transform="rotate(45)"/></g></g><path d="M10 10.5 L13.5 11 L12.5 13.5 Z" fill="#222"/></svg>
<svg class="r" style="left:1483px;top:380px" width="14" height="14" viewBox="0 0 14 14"><g transform="translate(6 6)"><circle r="3.9" fill="none" stroke="#222" stroke-width="2.4"/><g fill="#222"><rect x="-1.2" y="-6" width="2.4" height="2.6"/><rect x="-1.2" y="3.4" width="2.4" height="2.6"/><rect x="-6" y="-1.2" width="2.6" height="2.4"/><rect x="3.4" y="-1.2" width="2.6" height="2.4"/><rect x="-1.2" y="-6" width="2.4" height="2.6" transform="rotate(45)"/><rect x="-1.2" y="3.4" width="2.4" height="2.6" transform="rotate(45)"/><rect x="-6" y="-1.2" width="2.6" height="2.4" transform="rotate(45)"/><rect x="3.4" y="-1.2" width="2.6" height="2.4" transform="rotate(45)"/></g></g><path d="M10 10.5 L13.5 11 L12.5 13.5 Z" fill="#222"/></svg>
<div class="r" style="left:98px;top:114px;width:1px;height:20px;background:#dcdcdc;"></div>
<div class="r" style="left:187px;top:114px;width:1px;height:20px;background:#dcdcdc;"></div>
<div class="r" style="left:300px;top:114px;width:1px;height:20px;background:#dcdcdc;"></div>
<div class="r" style="left:421px;top:114px;width:1px;height:20px;background:#dcdcdc;"></div>
<div class="r" style="left:23px;top:114px;width:1px;height:20px;background:#e2e2e2;"></div>
<div class="r" style="left:519px;top:113.5px;width:115px;height:21.5px;background:#ffffff;"></div>
<svg class="r" style="left:72px;top:117.5px" width="13.5" height="13.5" viewBox="0 0 13.5 13.5"><rect x="0" y="0" width="13.5" height="13.5" rx="2.2" fill="#c6c6c6"/><path d="M4 4 L9.5 9.5 M9.5 4 L4 9.5" stroke="#fff" stroke-width="1.5"/></svg>
<svg class="r" style="left:161px;top:117.5px" width="13.5" height="13.5" viewBox="0 0 13.5 13.5"><rect x="0" y="0" width="13.5" height="13.5" rx="2.2" fill="#c6c6c6"/><path d="M4 4 L9.5 9.5 M9.5 4 L4 9.5" stroke="#fff" stroke-width="1.5"/></svg>
<svg class="r" style="left:275.5px;top:117.5px" width="13.5" height="13.5" viewBox="0 0 13.5 13.5"><rect x="0" y="0" width="13.5" height="13.5" rx="2.2" fill="#c6c6c6"/><path d="M4 4 L9.5 9.5 M9.5 4 L4 9.5" stroke="#fff" stroke-width="1.5"/></svg>
<svg class="r" style="left:395px;top:117.5px" width="13.5" height="13.5" viewBox="0 0 13.5 13.5"><rect x="0" y="0" width="13.5" height="13.5" rx="2.2" fill="#c6c6c6"/><path d="M4 4 L9.5 9.5 M9.5 4 L4 9.5" stroke="#fff" stroke-width="1.5"/></svg>
<svg class="r" style="left:494px;top:117.5px" width="13.5" height="13.5" viewBox="0 0 13.5 13.5"><rect x="0" y="0" width="13.5" height="13.5" rx="2.2" fill="#c6c6c6"/><path d="M4 4 L9.5 9.5 M9.5 4 L4 9.5" stroke="#fff" stroke-width="1.5"/></svg>
<svg class="r" style="left:608.3px;top:117px" width="13.5" height="13.5" viewBox="0 0 13.5 13.5"><rect x="0" y="0" width="13.5" height="13.5" rx="2.2" fill="#e07446"/><path d="M4 4 L9.5 9.5 M9.5 4 L4 9.5" stroke="#fff" stroke-width="1.5"/></svg>
<svg class="r" style="left:4.5px;top:334.5px" width="11" height="11" viewBox="0 0 11 11"><path d="M1.5 1.5 L9.5 9.5 M9.5 1.5 L1.5 9.5" stroke="#222" stroke-width="2.4"/></svg>
<div class="r" style="left:27px;top:329.8px;width:1250.5px;height:16.6px;background:#fff;border:1px solid #9f9f9f;border-top:1.6px solid #a6a6a6;border-bottom:1.3px solid #a0a0a0;"></div>
<svg class="r" style="left:1265px;top:336px" width="12" height="7" viewBox="0 0 12 7"><path d="M1 1 L6 5.5 L11 1" fill="none" stroke="#777" stroke-width="1.1"/></svg>
<svg class="r" style="left:1346px;top:333.5px" width="13" height="13" viewBox="0 0 13 13"><circle cx="6.3" cy="6.3" r="5.3" fill="none" stroke="#222" stroke-width="1.8"/><path d="M6.3 9.5 V3.8 M3.8 6.3 L6.3 3.6 L8.8 6.3" fill="none" stroke="#222" stroke-width="1.8"/></svg>
<svg class="r" style="left:1373.5px;top:333.5px" width="13" height="13" viewBox="0 0 13 13"><circle cx="6.3" cy="6.3" r="5.3" fill="none" stroke="#222" stroke-width="1.8"/><path d="M6.3 3.2 V8.8 M3.8 6.3 L6.3 9 L8.8 6.3" fill="none" stroke="#222" stroke-width="1.8"/></svg>
<svg class="r" style="left:1400px;top:332px" width="16" height="15" viewBox="0 0 16 15"><circle cx="2.8" cy="12.3" r="1.5" fill="#222"/><text x="4" y="13" font-family="Liberation Sans" font-weight="bold" font-size="15" fill="#222">*</text></svg>
<svg class="r" style="left:1426px;top:332px" width="18" height="14" viewBox="0 0 18 14"><text x="0.5" y="11.5" font-family="Liberation Sans" font-weight="bold" font-size="12" fill="#2a78d0">A</text><text x="8.6" y="11.5" font-family="Liberation Sans" font-weight="bold" font-size="10.5" fill="#3aa040">a</text></svg>
<svg class="r" style="left:1453px;top:332px" width="16" height="14" viewBox="0 0 16 14"><path d="M3.5 1.5 H1.2 V11.5 H3.5 M12.5 1.5 H14.8 V11.5 H12.5" fill="none" stroke="#f0a060" stroke-width="1.4"/><rect x="4.5" y="5.6" width="7" height="2" fill="#3a7ad0"/></svg>
<svg class="r" style="left:1480px;top:331px" width="18" height="16" viewBox="0 0 18 16"><path d="M3 13 L13 3 L16 5 L6 15 Z" fill="#d0d8e8" stroke="#6a7ab0" stroke-width="0.8"/><path d="M2 9 L9 9 L5 14 Z" fill="#f0d040"/><path d="M2 15 H10" stroke="#e8c030" stroke-width="1.5"/></svg>
<div class="r" style="left:22px;top:375px;width:100px;height:21.5px;background:#ffffff;"></div>
<svg class="r" style="left:96.3px;top:378.8px" width="13.5" height="13.5" viewBox="0 0 13.5 13.5"><rect x="0" y="0" width="13.5" height="13.5" rx="2.2" fill="#e07446"/><path d="M4 4 L9.5 9.5 M9.5 4 L4 9.5" stroke="#fff" stroke-width="1.5"/></svg>
<div class="r" style="left:1442px;top:381px;width:11.5px;height:11.5px;background:#a80a0a;"></div>
<svg class="r" style="left:1460px;top:381px" width="16" height="12" viewBox="0 0 16 12"><path d="M1 10.5 L6 1.5 H14.5 L9.5 10.5 Z" fill="#fff" stroke="#222" stroke-width="1.5"/><path d="M6 1.5 H14.5 L12 6 H3.5 Z" fill="#222"/></svg>
<div class="r" style="left:0px;top:396px;width:1500px;height:1.6px;background:#5b94c2;"></div>
<div class="r" style="left:0px;top:786px;width:1500px;height:1.6px;background:#4a86ba;"></div>
<div class="r" style="left:0px;top:396px;width:1.4px;height:391px;background:#2f6fa6;"></div>
<div class="r" style="left:1498.6px;top:396px;width:1.4px;height:391px;background:#3a7ab0;"></div>
<div class="r" style="left:1483.5px;top:397.6px;width:14.9px;height:388.4px;background:#f2f2f2;"></div>
<div class="r" style="left:1484.5px;top:428.5px;width:13.5px;height:51.5px;background:#cdcdcd;"></div>
<svg class="r" style="left:1486px;top:403px" width="10" height="7" viewBox="0 0 10 7"><path d="M1.5 5.5 L5 2 L8.5 5.5" stroke="#444" stroke-width="1.6" fill="none"/></svg>
<svg class="r" style="left:1486px;top:774.5px" width="10" height="7" viewBox="0 0 10 7"><path d="M1.5 1.5 L5 5 L8.5 1.5" stroke="#444" stroke-width="1.6" fill="none"/></svg>
<div class="r" style="left:1px;top:787.5px;width:95px;height:18.5px;background:#ffffff;"></div>
<div class="r" style="left:96px;top:787.5px;width:287px;height:17px;background:#ededed;"></div>
<div class="r" style="left:174px;top:789px;width:1px;height:15px;background:#d8d8d8;"></div>
<div class="r" style="left:215px;top:789px;width:1px;height:15px;background:#d8d8d8;"></div>
<div class="r" style="left:313px;top:789px;width:1px;height:15px;background:#d8d8d8;"></div>
<div class="r" style="left:383px;top:789px;width:1px;height:15px;background:#d8d8d8;"></div>
<div class="r" style="left:1017px;top:809px;width:1px;height:14px;background:#dcdcdc;"></div>
<div class="r" style="left:1122px;top:809px;width:1px;height:14px;background:#dcdcdc;"></div>
<div class="r" style="left:1260.5px;top:809px;width:1px;height:14px;background:#dcdcdc;"></div>
<div class="r" style="left:1393px;top:809px;width:1px;height:14px;background:#dcdcdc;"></div>
<svg class="r" style="left:440px;top:589px" width="9" height="18" viewBox="0 0 9 18"><path d="M1.5 1 H3.5 L4.5 2 L5.5 1 H7.5 M4.5 2 V16 M1.5 17 H3.5 L4.5 16 L5.5 17 H7.5" fill="none" stroke="#555" stroke-width="1.2"/></svg>
</body></html>
